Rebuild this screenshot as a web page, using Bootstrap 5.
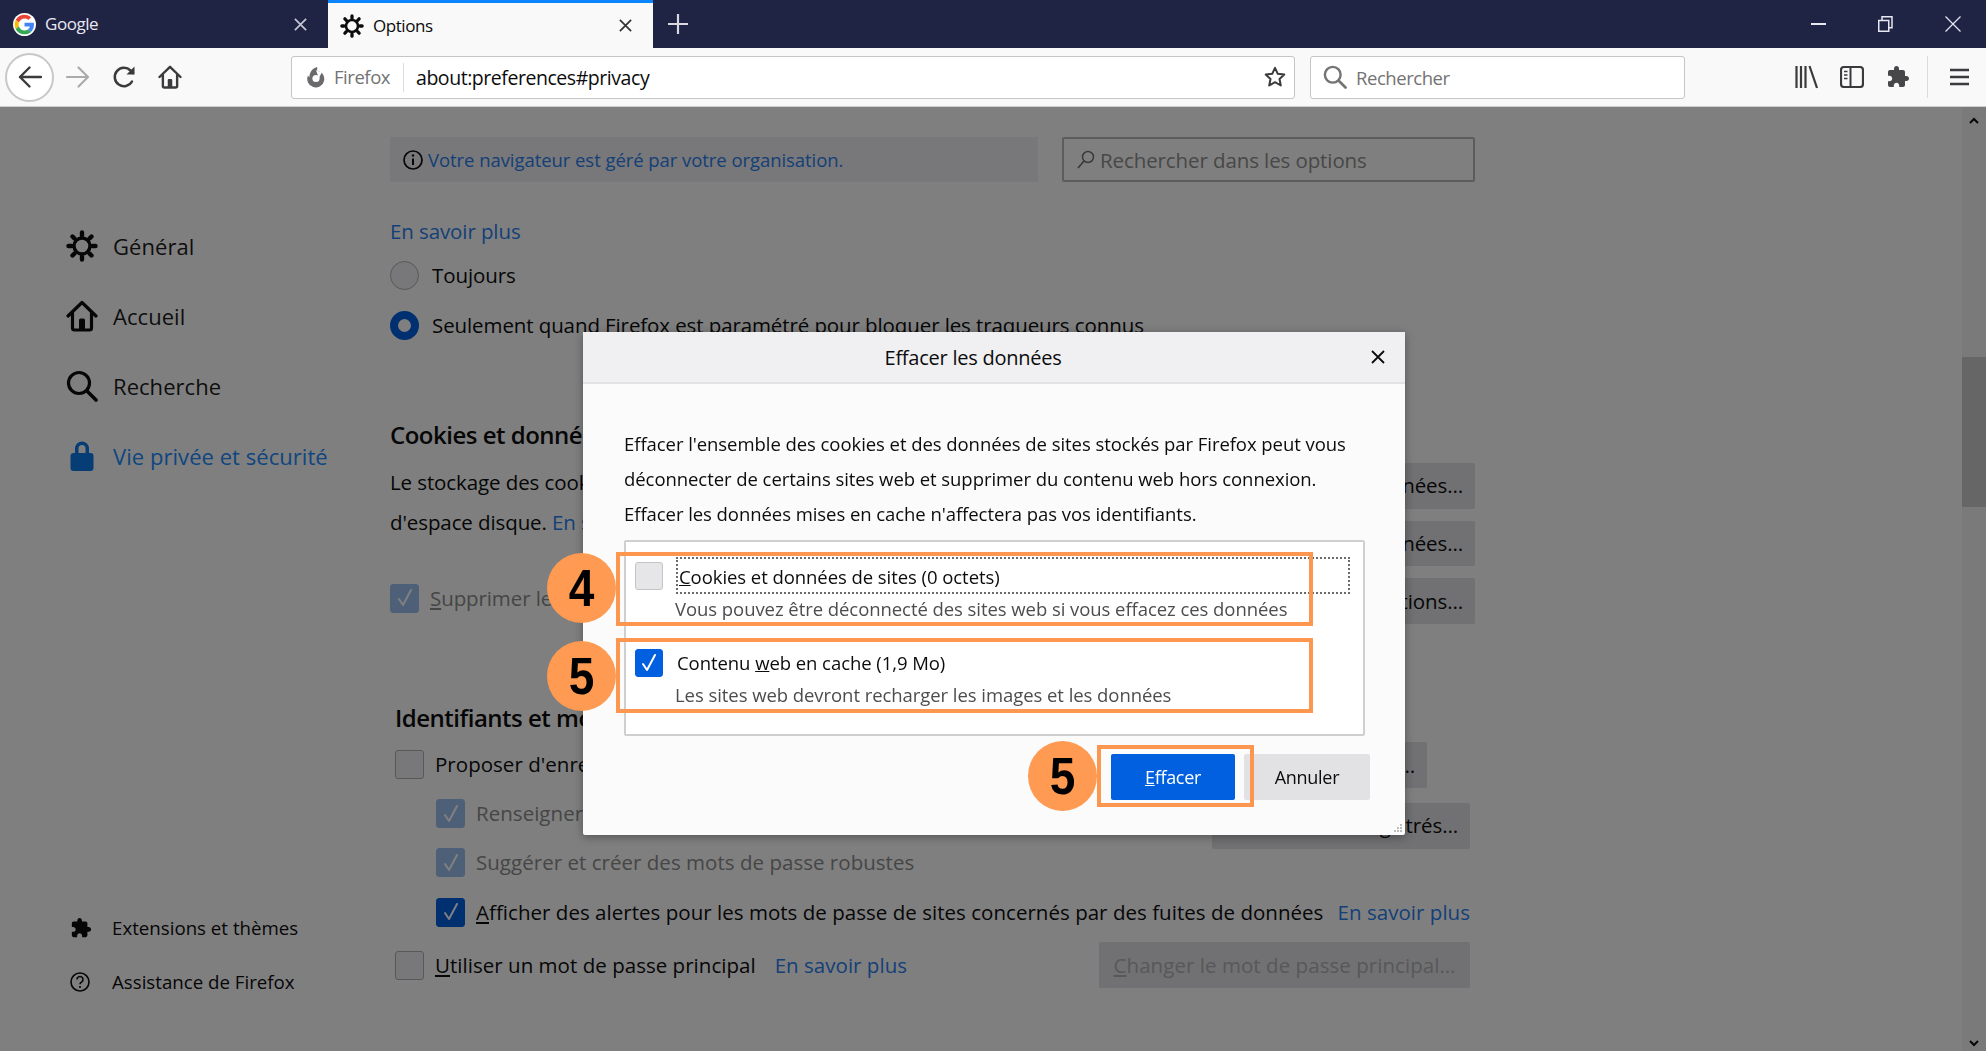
<!DOCTYPE html>
<html lang="fr">
<head>
<meta charset="UTF-8" />
<meta name="viewport" content="width=device-width, initial-scale=1" />
<title>Options</title>
<link href="https://cdn.jsdelivr.net/npm/bootstrap@5.3.0/dist/css/bootstrap.min.css" rel="stylesheet" />
<style>
  body { font-family: "Open Sans", "Liberation Sans", sans-serif; color: #0c0c0d; overflow: hidden; background: #fff; letter-spacing: -.1px; }
  svg { display: block; flex: none; }

  /* tab strip */
  .tab-strip { height: 48px; background: #1f2344; color: #e8e8f0; }
  .ff-tab { width: 328px; padding-left: 13px; font-size: 17px; letter-spacing: -.45px; }
  .ff-tab.on { width: 325px; padding-left: 12px; background: #f9f9fa; color: #0c0c0d; border-top: 3px solid #0a84ff; }
  .tab-label { margin-left: 9px; }
  .tab-x { margin-right: 20px; }
  .tab-new { width: 50px; }
  .win-btn { width: 67px; }

  /* toolbar */
  .tool-bar { height: 59px; background: #f9f9fa; border-bottom: 1px solid #cfcfd1; padding-left: 5px; }
  .back-btn { width: 49px; height: 49px; margin-right: 1px; border-radius: 50%; border: 2px solid #c8c8c8; background: #fff; }
  .tool-btn { width: 46px; height: 44px; }
  .url-box { width: 1004px; height: 43px; margin-left: 98px; background: #fff; border: 1px solid #c6c6c8; border-radius: 3px; font-size: 19.500px; letter-spacing: -.45px; }
  .url-id { width: 112px; height: 29px; padding-left: 13px; border-right: 1px solid #dcdcde; color: #737373; font-size: 18.500px; gap: 7px; }
  .url-text { margin-left: 12px; padding-top: 2px; }
  .url-star { margin-right: 8px; }
  .find-box { width: 375px; height: 43px; margin-left: 15px; padding-left: 12px; gap: 9px; background: #fff; border: 1px solid #c6c6c8; border-radius: 3px; color: #737373; font-size: 18.500px; letter-spacing: -.45px; }
  .find-box span { padding-top: 2px; }
  .lib-btn { margin-left: 98px; }
  .bar-sep { width: 1px; height: 42px; margin: 0 8px 0 6px; background: #dcdcde; }

  /* preferences page */
  .pref-pane { height: 944px; }
  .side-nav { width: 390px; padding: 104px 0 42px 66px; }
  .nav-row { height: 70px; gap: 15px; font-size: 22px; letter-spacing: .05px; color: #1c1c1c; }
  .nav-icon { width: 32px; }
  .nav-row.on { color: #1c8cff; }
  .foot-row { height: 54px; gap: 20px; font-size: 18.700px; letter-spacing: 0; padding-left: 4px; }
  .foot-help { gap: 22px; }
  .pref-main { width: 1085px; padding-top: 30px; font-size: 20.500px; white-space: nowrap; }
  .org-note { width: 648px; height: 45px; padding-left: 13px; gap: 5px; background: #f0f0f4; font-size: 18.500px; letter-spacing: -.06px; }
  .pref-link { color: #2a7fee; text-decoration: none; }
  .find-pref { width: 413px; height: 45px; padding-left: 13px; gap: 5px; border: 2px solid #b8b8ba; border-radius: 2px; color: #909090; }
  .find-pref span { padding-top: 2px; }
  .cut-link { height: 21px; margin-top: 42px; overflow: hidden; line-height: 21px; }
  .cut-link a { position: relative; top: -3px; }
  .choice-row { height: 50px; gap: 13px; }
  .choice-first { margin-top: 5px; }
  .pref-head { font-size: 24px; font-weight: 600; letter-spacing: -.5px; }
  .head-a { margin-top: 65px; height: 40px; }
  .store-wrap { height: 162px; margin-top: 7px; }
  .text-line { height: 40px; }
  .box-line { height: 40px; gap: 11px; margin-top: 36px; }
  .act-btns { gap: 12px; margin-top: 1px; }
  .act-btn { height: 46px; padding: 0 12px; border: 0; border-radius: 2px; background: #e2e2e6; color: #0c0c0d; font-size: 20.500px; letter-spacing: -.1px; }
  .act-btn.off { color: #b0b0b0; letter-spacing: .05px; }
  .creds { width: 1075px; margin-left: 5px; letter-spacing: .03px; }
  .head-b { margin-top: 72px; height: 44px; }
  .pref-row { height: 49px; gap: 11px; }
  .row-in { padding-left: 41px; }
  .row-gap { margin-left: auto; }
  .row-tall { height: 56px; }
  .btn-up { margin-top: 1px; margin-right: 43px; }
  .btn-down { margin-top: 24px; }
  .row-alert { height: 50px; letter-spacing: .03px; }
  .btn-last { width: 371px; }
  .text-off { color: #8c8c8c; }

  .form-check-input.ff-check { width: 29px; height: 29px; margin: 0; flex: none; border: 1px solid #b1b1b3; border-radius: 3px; background-color: #f0f0f4; }
  .form-check-input.ff-check:checked { background-color: #0060df; border-color: #0060df; background-size: 24px; background-image: url("data:image/svg+xml,%3csvg xmlns='http://www.w3.org/2000/svg' viewBox='0 0 24 24'%3e%3cpath fill='none' stroke='%23fff' stroke-width='2' stroke-linecap='round' stroke-linejoin='round' d='M6 13l4 6 8-15'/%3e%3c/svg%3e"); }
  .form-check-input.ff-check.faded:checked { opacity: 1; background-color: #9cc0f0; border-color: #9cc0f0; }
  .form-check-input.ff-radio { width: 29px; height: 29px; margin: 0; flex: none; border: 1px solid #b1b1b3; background-color: #f0f0f4; }
  .form-check-input.ff-radio:checked { background: #fff; border: 8px solid #0060df; }

  .page-scroll { width: 24px; margin-left: auto; height: 100%; background: #f4f4f4; }
  .scroll-thumb { height: 150px; margin-top: 250px; background: #cdcdcd; }
  .scroll-up { top: 8px; left: 6px; }
  .scroll-down { bottom: 2px; left: 6px; }

  /* dialog over the page */
  .page-dim { top: 107px; height: calc(100vh - 107px); }
  .clear-dialog { left: 583px; top: 225px; width: 822px; height: 503px; z-index: 1060; background: #fbfbfb; border: 0; border-radius: 2px; box-shadow: 0 2px 10px rgba(0,0,0,.35); font-size: 18.500px; letter-spacing: -.06px; }
  .dlg-head { height: 52px; background: #f0f0f2; border-bottom: 2px solid #e2e2e4; padding-right: 12px; }
  .dlg-title { font-size: 20px; font-weight: 500; letter-spacing: -.25px; padding-top: 2px; }
  .dlg-close { width: 30px; border: 0; background: none; padding: 0; }
  .dlg-body { padding: 43px 35px 0 41px; }
  .dlg-text { margin: 0; line-height: 34.800px; white-space: nowrap; }
  .site-list { width: 741px; height: 196px; margin-top: 9px; padding: 15px 0 0 9px; background: #fff; border: 2px solid #cfcfd1; border-radius: 2px; }
  .site-item { gap: 13px; height: 37px; }
  .site-name { flex: 1; height: 37px; line-height: 38px; padding-left: 1px; margin-right: 13px; }
  .site-focus { border: 2px dotted #6a6a6a; line-height: 35px; }
  .site-item .form-check-input.ff-check { width: 28px; height: 28px; }
  .site-item .form-check-input.ff-check:not(:checked) { background-color: #e6e6e8; border-color: #c4c4c6; }
  .site-note { margin-top: -1px; padding-left: 40px; line-height: 32px; color: #4d4d4f; white-space: nowrap; }
  .site-two { margin-top: 20px; height: 35px; }
  .dlg-foot { margin-top: 18px; gap: 9px; }
  .dlg-btn { height: 46px; border: 0; border-radius: 2px; font-size: 18px; padding: 0; letter-spacing: -.3px; }
  .btn-clear { width: 124px; background: #0060df; color: #fff; }
  .btn-quit { width: 126px; background: #e2e2e4; color: #0c0c0d; }
  .dlg-grip { right: 2px; bottom: 2px; }

  /* orange callouts */
  .call-box { z-index: 1070; border: 4px solid #fd9750; }
  .call-one { left: 616px; top: 445px; width: 697px; height: 74px; }
  .call-two { left: 616px; top: 531px; width: 697px; height: 75px; }
  .call-three { left: 1097px; top: 638px; width: 157px; height: 62px; }
  .call-dot { z-index: 1071; width: 69px; height: 70px; border-radius: 50%; background: #ff9a52; color: #000; font-family: "Liberation Sans", sans-serif; font-size: 46px; font-weight: 700; letter-spacing: 0; }
  .dot-num { display: inline-block; transform: scaleY(1.14); }
  .dot-one { left: 547px; top: 446px; }
  .dot-two { left: 547px; top: 534px; }
  .dot-three { left: 1028px; top: 634px; }
</style>
</head>
<body>

<svg class="d-none">
  <symbol id="i-gear" viewBox="0 0 32 32">
    <circle cx="16" cy="16" r="8" fill="none" stroke="currentColor" stroke-width="3.400" />
    <g stroke="currentColor" stroke-width="4.400" stroke-linecap="round">
      <path d="M16 2.500v3M16 26.500v3M2.500 16h3M26.500 16h3M6.500 6.500l2 2M23.500 23.500l2 2M6.500 25.500l2-2M23.500 8.500l2-2" />
    </g>
  </symbol>
  <symbol id="i-home" viewBox="0 0 32 32">
    <path d="M2 16L16 2.500 30 16M6.500 13v15a2 2 0 0 0 2 2h15a2 2 0 0 0 2-2V13" fill="none" stroke="currentColor" stroke-width="3.200" stroke-linecap="round" stroke-linejoin="round" />
    <path d="M13 30V20a1.500 1.500 0 0 1 1.500-1.500h3A1.500 1.500 0 0 1 19 20v10z" fill="currentColor" />
  </symbol>
  <symbol id="i-find" viewBox="0 0 32 32">
    <circle cx="13" cy="13" r="10.500" fill="none" stroke="currentColor" stroke-width="3.200" />
    <path d="M21 21l9 9" stroke="currentColor" stroke-width="3.600" stroke-linecap="round" />
  </symbol>
  <symbol id="i-piece" viewBox="0 0 24 24">
    <path fill="currentColor" d="M20.500 11H19V7c0-1.100-.9-2-2-2h-4V3.500C13 2.120 11.880 1 10.500 1S8 2.120 8 3.500V5H4c-1.100 0-1.990.9-1.990 2v3.800H3.500c1.490 0 2.700 1.210 2.700 2.700s-1.210 2.700-2.700 2.700H2V20c0 1.100.9 2 2 2h3.800v-1.500c0-1.490 1.210-2.700 2.700-2.700 1.490 0 2.700 1.210 2.700 2.700V22H17c1.100 0 2-.9 2-2v-4h1.500c1.380 0 2.500-1.120 2.500-2.500S21.880 11 20.500 11z" />
  </symbol>
  <symbol id="i-cross" viewBox="0 0 16 16">
    <path d="M2 2l12 12M14 2L2 14" stroke="currentColor" stroke-width="1.800" fill="none" />
  </symbol>
</svg>

<div class="d-flex tab-strip">
  <div class="d-flex align-items-center ff-tab">
    <svg width="23" height="23" viewBox="-4 -4 56 56">
      <circle cx="24" cy="24" r="28" fill="#fff" />
      <path fill="#EA4335" d="M24 9.500c3.540 0 6.710 1.220 9.210 3.600l6.850-6.850C35.900 2.380 30.470 0 24 0 14.620 0 6.510 5.380 2.560 13.220l7.980 6.190C12.430 13.720 17.740 9.500 24 9.500z" />
      <path fill="#4285F4" d="M46.980 24.550c0-1.570-.15-3.090-.38-4.550H24v9.020h12.940c-.58 2.960-2.260 5.480-4.780 7.180l7.730 6c4.510-4.180 7.090-10.360 7.090-17.650z" />
      <path fill="#FBBC05" d="M10.530 28.590c-.48-1.450-.76-2.990-.76-4.590s.27-3.140.76-4.590l-7.980-6.190C.92 16.460 0 20.120 0 24c0 3.880.92 7.540 2.560 10.780l7.970-6.190z" />
      <path fill="#34A853" d="M24 48c6.480 0 11.930-2.130 15.890-5.810l-7.730-6c-2.150 1.450-4.920 2.300-8.160 2.300-6.260 0-11.570-4.220-13.470-9.910l-7.980 6.190C6.510 42.620 14.620 48 24 48z" />
    </svg>
    <span class="tab-label flex-grow-1">Google</span>
    <svg class="tab-x" width="15" height="15" color="#c4c6d2"><use href="#i-cross" /></svg>
  </div>
  <div class="d-flex align-items-center ff-tab on">
    <svg width="24" height="24" color="#0c0c0d"><use href="#i-gear" /></svg>
    <span class="tab-label flex-grow-1">Options</span>
    <svg class="tab-x" width="15" height="15" color="#333"><use href="#i-cross" /></svg>
  </div>
  <div class="d-flex align-items-center justify-content-center tab-new">
    <svg width="20" height="20" viewBox="0 0 20 20"><path d="M10 0v20M0 10h20" stroke="#d8d8e2" stroke-width="2.200" /></svg>
  </div>
  <div class="d-flex ms-auto">
    <div class="d-flex align-items-center justify-content-center win-btn">
      <svg width="15" height="2"><rect width="15" height="2" fill="#e8e8f0" /></svg>
    </div>
    <div class="d-flex align-items-center justify-content-center win-btn">
      <svg width="15" height="16" viewBox="0 0 15 16"><path d="M.75 4.500h10v10.750h-10zM4 4.500V.75h10v11h-3" fill="none" stroke="#e8e8f0" stroke-width="1.500" /></svg>
    </div>
    <div class="d-flex align-items-center justify-content-center win-btn">
      <svg width="16" height="16" viewBox="0 0 16 16"><path d="M.5.5l15 15M15.500.5l-15 15" stroke="#e8e8f0" stroke-width="1.200" /></svg>
    </div>
  </div>
</div>

<div class="d-flex align-items-center tool-bar">
  <div class="d-flex align-items-center justify-content-center back-btn">
    <svg width="24" height="22" viewBox="0 0 24 22"><path d="M23 11H2M11.500 1.500L2 11l9.500 9.500" fill="none" stroke="#3b3b3d" stroke-width="2.400" stroke-linecap="round" stroke-linejoin="round" /></svg>
  </div>
  <div class="d-flex align-items-center justify-content-center tool-btn">
    <svg width="24" height="22" viewBox="0 0 24 22"><path d="M1 11h21M12.500 1.500L22 11l-9.500 9.500" fill="none" stroke="#ababad" stroke-width="2.200" stroke-linecap="round" stroke-linejoin="round" /></svg>
  </div>
  <div class="d-flex align-items-center justify-content-center tool-btn">
    <svg width="24" height="24" viewBox="0 0 24 24"><path d="M20 16.500A9.200 9.200 0 1 1 18.500 5.500L21 8" fill="none" stroke="#3b3b3d" stroke-width="2.500" stroke-linecap="round" /><path d="M22.500 1.500v8h-8z" fill="#3b3b3d" /></svg>
  </div>
  <div class="d-flex align-items-center justify-content-center tool-btn">
    <svg width="24" height="24" color="#3b3b3d"><use href="#i-home" /></svg>
  </div>
  <div class="d-flex align-items-center url-box">
    <div class="d-flex align-items-center url-id">
      <svg width="22" height="22" viewBox="0 0 22 22"><path fill="#6a6a6c" d="M12 1c.6 1.400.3 2.600-.5 3.500A8.500 8.500 0 1 1 3 9.500C3.300 10.300 3.800 11 4.500 11.300 4.200 7 7 2.500 12 1z" /><circle cx="11" cy="12.500" r="3.600" fill="#fff" /><path fill="#fff" d="M11 4.500l6 1.500-3 6z" /></svg>
      <span>Firefox</span>
    </div>
    <span class="url-text flex-grow-1">about:preferences#privacy</span>
    <svg class="url-star" width="22" height="22" viewBox="0 0 22 22"><path d="M11 1.800l2.800 6 6.500.8-4.800 4.400 1.300 6.500-5.800-3.300-5.800 3.300 1.300-6.500L1.700 8.600l6.500-.8z" fill="none" stroke="#3b3b3d" stroke-width="2" stroke-linejoin="round" /></svg>
  </div>
  <div class="d-flex align-items-center find-box">
    <svg width="24" height="24" color="#737373"><use href="#i-find" /></svg>
    <span>Rechercher</span>
  </div>
  <div class="d-flex align-items-center justify-content-center tool-btn lib-btn">
    <svg width="23" height="24" viewBox="0 0 23 24"><path d="M1.500 1v22M6 1v22M10.500 1v22M14.500 1l7.500 22" stroke="#3b3b3d" stroke-width="2.200" fill="none" /></svg>
  </div>
  <div class="d-flex align-items-center justify-content-center tool-btn">
    <svg width="24" height="22" viewBox="0 0 24 22"><rect x="1" y="1" width="22" height="20" rx="3" fill="none" stroke="#3b3b3d" stroke-width="2.200" /><path d="M10.500 1v20" stroke="#3b3b3d" stroke-width="2" /><path d="M4 5.500h3.500M4 9h3.500M4 12.500h3.500" stroke="#3b3b3d" stroke-width="1.600" /></svg>
  </div>
  <div class="d-flex align-items-center justify-content-center tool-btn">
    <svg width="24" height="24" color="#47474a"><use href="#i-piece" /></svg>
  </div>
  <div class="bar-sep"></div>
  <div class="d-flex align-items-center justify-content-center tool-btn">
    <svg width="19" height="18" viewBox="0 0 19 18"><path d="M0 2h19M0 9h19M0 16h19" stroke="#3b3b3d" stroke-width="2.600" /></svg>
  </div>
</div>

<div class="d-flex position-relative pref-pane">
  <div class="d-flex flex-column side-nav">
    <div class="d-flex align-items-center nav-row"><svg class="nav-icon" height="34" color="#0c0c0d"><use href="#i-gear" /></svg><span>Général</span></div>
    <div class="d-flex align-items-center nav-row"><svg class="nav-icon" height="34" color="#0c0c0d"><use href="#i-home" /></svg><span>Accueil</span></div>
    <div class="d-flex align-items-center nav-row"><svg class="nav-icon" height="34" color="#0c0c0d"><use href="#i-find" /></svg><span>Recherche</span></div>
    <div class="d-flex align-items-center nav-row on">
      <svg class="nav-icon" height="36" viewBox="0 0 32 34"><path fill="#0a7ae8" d="M9 14V9.500a7 7 0 0 1 14 0V14h1.500a3 3 0 0 1 3 3v12a3 3 0 0 1-3 3h-17a3 3 0 0 1-3-3V17a3 3 0 0 1 3-3zm3.500 0h7V9.500a3.500 3.500 0 0 0-7 0z" /></svg>
      <span>Vie privée et sécurité</span>
    </div>
    <div class="d-flex align-items-center foot-row mt-auto"><svg width="22" height="22" color="#0c0c0d"><use href="#i-piece" /></svg><span>Extensions et thèmes</span></div>
    <div class="d-flex align-items-center foot-row foot-help">
      <svg width="20" height="20" viewBox="0 0 20 20"><circle cx="10" cy="10" r="9" fill="none" stroke="#0c0c0d" stroke-width="1.600" /><path d="M7 7.500a3 3 0 1 1 4.500 2.600c-1 .6-1.500 1-1.500 2.200" fill="none" stroke="#0c0c0d" stroke-width="1.600" /><circle cx="10" cy="15" r="1.100" fill="#0c0c0d" /></svg>
      <span>Assistance de Firefox</span>
    </div>
  </div>

  <div class="pref-main">
    <div class="d-flex justify-content-between">
      <div class="d-flex align-items-center org-note">
        <svg width="20" height="20" viewBox="0 0 20 20"><circle cx="10" cy="10" r="9" fill="none" stroke="#0c0c0d" stroke-width="1.700" /><path d="M10 8.500v6.500" stroke="#0c0c0d" stroke-width="2" /><circle cx="10" cy="5.500" r="1.200" fill="#0c0c0d" /></svg>
        <a class="pref-link" href="#">Votre navigateur est géré par votre organisation.</a>
      </div>
      <div class="d-flex align-items-center find-pref">
        <svg width="18" height="20" viewBox="0 0 18 20"><circle cx="11" cy="7" r="5.500" fill="none" stroke="#737373" stroke-width="1.500" /><path d="M7 11l-6 7" stroke="#737373" stroke-width="1.700" /></svg>
        <span>Rechercher dans les options</span>
      </div>
    </div>

    <div class="cut-link"><a class="pref-link" href="#">En savoir plus</a></div>
    <div class="d-flex align-items-center choice-row choice-first"><input class="form-check-input ff-radio" type="radio" name="dnt" /><span>Toujours</span></div>
    <div class="d-flex align-items-center choice-row"><input class="form-check-input ff-radio" type="radio" name="dnt" checked /><span>Seulement quand Firefox est paramétré pour bloquer les traqueurs connus</span></div>

    <div class="d-flex align-items-center pref-head head-a">Cookies et données de sites</div>
    <div class="d-flex justify-content-between store-wrap">
      <div>
        <div class="d-flex align-items-center text-line">Le stockage des cookies, des données de sites et du cache utilise</div>
        <div class="d-flex align-items-center text-line">d'espace disque.&nbsp; <a class="pref-link" href="#">En savoir plus</a></div>
        <div class="d-flex align-items-center box-line"><input class="form-check-input ff-check faded" type="checkbox" checked /><span class="text-off"><u>S</u>upprimer les cookies et les données de sites</span></div>
      </div>
      <div class="d-flex flex-column align-items-end act-btns">
        <button class="act-btn" type="button">Effacer les données…</button>
        <button class="act-btn" type="button">Gérer les données…</button>
        <button class="act-btn" type="button">Gérer les exceptions…</button>
      </div>
    </div>

    <div class="creds">
      <div class="d-flex align-items-center pref-head head-b">Identifiants et mots de passe</div>
      <div class="d-flex align-items-center pref-row">
        <input class="form-check-input ff-check" type="checkbox" /><span>Proposer d'enregistrer les identifiants</span>
        <button class="act-btn row-gap btn-up" type="button">Exceptions…</button>
      </div>
      <div class="d-flex align-items-center pref-row row-in">
        <input class="form-check-input ff-check faded" type="checkbox" checked /><span class="text-off">Renseigner automatiquement</span>
        <button class="act-btn row-gap btn-down" type="button">Identifiants enregistrés…</button>
      </div>
      <div class="d-flex align-items-center pref-row row-in">
        <input class="form-check-input ff-check faded" type="checkbox" checked /><span class="text-off">Suggérer et créer des mots de passe robustes</span>
      </div>
      <div class="d-flex align-items-center pref-row row-in row-alert">
        <input class="form-check-input ff-check" type="checkbox" checked /><span><u>A</u>fficher des alertes pour les mots de passe de sites concernés par des fuites de données</span>
        <a class="pref-link row-gap" href="#">En savoir plus</a>
      </div>
      <div class="d-flex align-items-center pref-row row-tall">
        <input class="form-check-input ff-check" type="checkbox" /><span><u>U</u>tiliser un mot de passe principal</span>
        <a class="pref-link ms-2" href="#">En savoir plus</a>
        <button class="act-btn off row-gap btn-last" type="button"><u>C</u>hanger le mot de passe principal…</button>
      </div>
    </div>
  </div>

  <div class="position-relative page-scroll">
    <svg class="position-absolute scroll-up" width="12" height="12" viewBox="0 0 12 12"><path d="M2 8l4-4 4 4" stroke="#0c0c0d" stroke-width="2" fill="none" /></svg>
    <div class="scroll-thumb"></div>
    <svg class="position-absolute scroll-down" width="12" height="12" viewBox="0 0 12 12"><path d="M2 4l4 4 4-4" stroke="#0c0c0d" stroke-width="2" fill="none" /></svg>
  </div>

  <div class="modal-backdrop show page-dim"></div>

  <div class="modal-content position-absolute clear-dialog">
    <div class="d-flex align-items-center dlg-head">
      <div class="flex-grow-1 text-center dlg-title">Effacer les données</div>
      <button class="d-flex justify-content-center dlg-close" type="button" aria-label="Fermer"><svg width="16" height="16" color="#0c0c0d"><use href="#i-cross" /></svg></button>
    </div>
    <div class="dlg-body">
      <p class="dlg-text">Effacer l'ensemble des cookies et des données de sites stockés par Firefox peut vous<br />déconnecter de certains sites web et supprimer du contenu web hors connexion.<br />Effacer les données mises en cache n'affectera pas vos identifiants.</p>
      <div class="site-list">
        <div class="d-flex align-items-center site-item">
          <input class="form-check-input ff-check" type="checkbox" />
          <div class="site-name site-focus"><u>C</u>ookies et données de sites (0 octets)</div>
        </div>
        <div class="site-note">Vous pouvez être déconnecté des sites web si vous effacez ces données</div>
        <div class="d-flex align-items-center site-item site-two">
          <input class="form-check-input ff-check" type="checkbox" checked />
          <div class="site-name">Contenu <u>w</u>eb en cache (1,9 Mo)</div>
        </div>
        <div class="site-note">Les sites web devront recharger les images et les données</div>
      </div>
      <div class="d-flex justify-content-end dlg-foot">
        <button class="dlg-btn btn-clear" type="button"><u>E</u>ffacer</button>
        <button class="dlg-btn btn-quit" type="button">Annuler</button>
      </div>
    </div>
    <svg class="position-absolute dlg-grip" width="10" height="10" viewBox="0 0 10 10"><path fill="#bdbdbd" d="M7 1h2v2H7zM4 4h2v2H4zM7 4h2v2H7zM1 7h2v2H1zM4 7h2v2H4zM7 7h2v2H7z" /></svg>
  </div>

  <div class="position-absolute call-box call-one"></div>
  <div class="position-absolute call-box call-two"></div>
  <div class="position-absolute call-box call-three"></div>
  <div class="position-absolute d-flex align-items-center justify-content-center call-dot dot-one"><span class="dot-num">4</span></div>
  <div class="position-absolute d-flex align-items-center justify-content-center call-dot dot-two"><span class="dot-num">5</span></div>
  <div class="position-absolute d-flex align-items-center justify-content-center call-dot dot-three"><span class="dot-num">5</span></div>
</div>

<script src="https://cdn.jsdelivr.net/npm/bootstrap@5.3.0/dist/js/bootstrap.bundle.min.js"></script>
</body>
</html>
